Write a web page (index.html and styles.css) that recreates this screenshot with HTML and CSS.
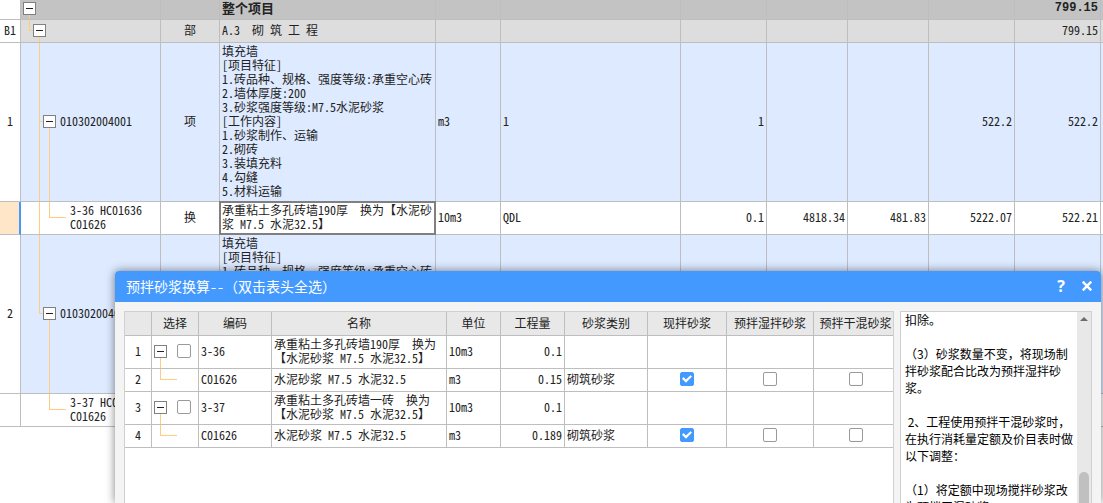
FILE: index.html
```html
<!DOCTYPE html>
<html lang="zh-CN">
<head>
<meta charset="utf-8">
<title>预拌砂浆换算</title>
<link rel="stylesheet" href="styles.css">
</head>
<body>
<main>
<table class="grid sheet">
  <colgroup>
    <col class="c-index"><col class="c-tree"><col class="c-kind"><col class="c-name"><col class="c-unit"><col>
    <col class="c-wide"><col class="c-price"><col class="c-price"><col class="c-wide"><col class="c-wide"><col class="c-rest">
  </colgroup>
  <tbody>
    <tr class="total">
      <td class="index"></td>
      <td class="tree level-0"><span class="line from-toggle"></span><button class="toggle" aria-label="折叠"></button></td>
      <td></td><td>整个项目</td><td></td><td></td><td></td><td></td><td></td><td></td><td class="num">799.15</td><td></td>
    </tr>
    <tr class="section">
      <td class="index">B1</td>
      <td class="tree level-1"><span class="line elbow to-toggle"></span><span class="line from-toggle"></span><button class="toggle" aria-label="折叠"></button></td>
      <td class="mid">部</td><td>A.3  砌 筑 工 程</td><td></td><td></td><td></td><td></td><td></td><td></td><td class="num">799.15</td><td></td>
    </tr>
    <tr class="item">
      <td class="index">1</td>
      <td class="tree level-2"><span class="line elbow to-toggle"></span><span class="line trunk"></span><span class="line from-toggle"></span><button class="toggle" aria-label="折叠"></button>010302004001</td>
      <td class="mid">项</td>
      <td>填充墙<br>[项目特征]<br>1.砖品种、规格、强度等级:承重空心砖<br>2.墙体厚度:200<br>3.砂浆强度等级:M7.5水泥砂浆<br>[工作内容]<br>1.砂浆制作、运输<br>2.砌砖<br>3.装填充料<br>4.勾缝<br>5.材料运输</td>
      <td>m3</td><td>1</td><td class="num">1</td><td></td><td></td><td class="num">522.2</td><td class="num">522.2</td><td></td>
    </tr>
    <tr class="detail">
      <td class="index current"></td>
      <td class="tree leaf"><span class="line trunk"></span><span class="line elbow to-text"></span>3-36 HC01636<br>C01626</td>
      <td class="mid">换</td>
      <td class="selected">承重粘土多孔砖墙190厚  换为【水泥砂<br>浆 M7.5 水泥32.5】</td>
      <td>10m3</td><td>QDL</td><td class="num">0.1</td><td class="num">4818.34</td><td class="num">481.83</td><td class="num">5222.07</td><td class="num">522.21</td><td></td>
    </tr>
    <tr class="item">
      <td class="index">2</td>
      <td class="tree level-2"><span class="line elbow to-toggle"></span><span class="line from-toggle"></span><button class="toggle" aria-label="折叠"></button>010302004001</td>
      <td></td>
      <td>填充墙<br>[项目特征]<br>1.砖品种、规格、强度等级:承重空心砖<br>2.墙体厚度:200<br>3.砂浆强度等级:M7.5水泥砂浆<br>[工作内容]<br>1.砂浆制作、运输<br>2.砌砖<br>3.装填充料<br>4.勾缝<br>5.材料运输</td>
      <td></td><td></td><td></td><td></td><td></td><td></td><td></td><td></td>
    </tr>
    <tr class="detail">
      <td class="index"></td>
      <td class="tree leaf"><span class="line elbow to-text"></span>3-37 HC01636<br>C01626</td>
      <td></td><td></td><td></td><td></td><td></td><td></td><td></td><td></td><td></td><td></td>
    </tr>
  </tbody>
</table>
</main>

<section class="dialog" role="dialog" aria-labelledby="dialog-title">
  <header class="titlebar">
    <h1 id="dialog-title">预拌砂浆换算<span class="dashes">--</span>（双击表头全选）</h1>
    <button class="help" aria-label="帮助">?</button>
    <button class="close" aria-label="关闭"><svg width="12" height="10" viewBox="0 0 12 10"><path d="M1.8 .6 10.2 9.4M10.2 .6 1.8 9.4" stroke="#fff" stroke-width="2.4" fill="none"/></svg></button>
  </header>
  <div class="content">
    <div class="pane">
      <table class="grid mortar">
        <colgroup>
          <col class="m-index"><col class="m-pick"><col class="m-code"><col><col class="m-unit"><col class="m-qty"><col class="m-type"><col class="m-site"><col class="m-wet"><col class="m-dry">
        </colgroup>
        <thead>
          <tr><th></th><th>选择</th><th>编码</th><th>名称</th><th>单位</th><th>工程量</th><th>砂浆类别</th><th>现拌砂浆</th><th>预拌湿拌砂浆</th><th>预拌干混砂浆</th></tr>
        </thead>
        <tbody>
          <tr class="detail">
            <td class="index">1</td>
            <td class="tree pick"><span class="line from-toggle"></span><div class="pair"><button class="toggle" aria-label="折叠"></button><input type="checkbox" aria-label="选择 3-36"></div></td>
            <td>3-36</td><td>承重粘土多孔砖墙190厚  换为<br>【水泥砂浆 M7.5 水泥32.5】</td><td>10m3</td><td class="num">0.1</td><td></td><td></td><td></td><td></td>
          </tr>
          <tr>
            <td class="index">2</td>
            <td class="tree pick"><span class="line elbow to-text"></span></td>
            <td>C01626</td><td>水泥砂浆 M7.5 水泥32.5</td><td>m3</td><td class="num">0.15</td><td>砌筑砂浆</td>
            <td class="mid"><input type="checkbox" aria-label="现拌砂浆" checked></td><td class="mid"><input type="checkbox" aria-label="预拌湿拌砂浆"></td><td class="mid"><input type="checkbox" aria-label="预拌干混砂浆"></td>
          </tr>
          <tr class="detail">
            <td class="index">3</td>
            <td class="tree pick"><span class="line from-toggle"></span><div class="pair"><button class="toggle" aria-label="折叠"></button><input type="checkbox" aria-label="选择 3-37"></div></td>
            <td>3-37</td><td>承重粘土多孔砖墙一砖  换为<br>【水泥砂浆 M7.5 水泥32.5】</td><td>10m3</td><td class="num">0.1</td><td></td><td></td><td></td><td></td>
          </tr>
          <tr>
            <td class="index">4</td>
            <td class="tree pick"><span class="line elbow to-text"></span></td>
            <td>C01626</td><td>水泥砂浆 M7.5 水泥32.5</td><td>m3</td><td class="num">0.189</td><td>砌筑砂浆</td>
            <td class="mid"><input type="checkbox" aria-label="现拌砂浆" checked></td><td class="mid"><input type="checkbox" aria-label="预拌湿拌砂浆"></td><td class="mid"><input type="checkbox" aria-label="预拌干混砂浆"></td>
          </tr>
        </tbody>
      </table>
    </div>
    <aside class="notes">
      <div class="notes-text">
        <p>扣除。</p>
        <p>（3）砂浆数量不变，将现场制拌砂浆配合比改为预拌湿拌砂浆。</p>
        <p>&nbsp;2、工程使用预拌干混砂浆时，在执行消耗量定额及价目表时做以下调整：</p>
        <p>（1）将定额中现场搅拌砂浆改为预拌干混砂浆。</p>
      </div>
      <div class="scrollbar">
        <svg width="8" height="4" viewBox="0 0 8 4"><path d="M0 4 4 0 8 4Z" fill="#6b6b72"/></svg>
        <div class="thumb"></div>
      </div>
    </aside>
  </div>
</section>
</body>
</html>
```
FILE: styles.css
```css
* { box-sizing: border-box; }

html, body { height: 100%; }

body {
  margin: 0;
  position: relative;
  overflow: hidden;
  background: #fff;
  color: #222;
  font-family: "Noto Sans CJK SC", sans-serif;
  font-size: 12px;
  line-height: 14px;
  text-spacing-trim: space-all;
}

button { padding: 0; border: 0; background: none; font: inherit; color: inherit; }

/* Grids */
.grid {
  width: 100%;
  table-layout: fixed;
  border-collapse: separate;
  border-spacing: 0;
  font-feature-settings: "hwid";
}

.grid td, .grid th {
  height: 23px;
  padding: 1px 2px 3px;
  border-right: 1px solid #bebebe;
  border-bottom: 1px solid #bebebe;
  vertical-align: middle;
  text-align: left;
  white-space: pre;
  overflow: hidden;
  font-weight: 400;
}

.grid .mid, .grid .index, .grid th { text-align: center; }
.grid .num { text-align: right; }
.grid .index { background: #fff; }
.grid .detail td { height: 33px; }

.c-index { width: 21px; }
.c-tree { width: 140px; }
.c-kind { width: 59px; }
.c-name { width: 216px; }
.c-unit { width: 65px; }
.c-wide { width: 86px; }
.c-price { width: 81px; }
.c-rest { width: 2px; }

.sheet td:last-child { padding: 0; border-right: 0; }
.sheet .total td { height: 20px; padding-top: 0; padding-bottom: 4px; background: #c3c3c3; font-size: 13px; font-weight: 700; }
.sheet .total .num { font-family: "Liberation Mono", monospace; font-size: 12px; }
.sheet .total .index { background: #fff; }
.sheet .section td { background: #ddd; }
.sheet .item td { background: #deeaff; }
.sheet .section .index, .sheet .item .index { background: #fff; }
.sheet .index.current { background: #ffe6c8; border-right: 2px solid #49f; }

.grid .selected { position: relative; overflow: visible; }
.selected::after {
  content: "";
  position: absolute;
  inset: -1px;
  border: 2px solid #808080;
}

/* Tree column */
.grid .tree { position: relative; --x: 0px; }
.grid .level-0 { --x: 2px; }
.grid .level-1 { --x: 12px; }
.grid .level-2 { --x: 22px; }
.grid .pick { --x: 2px; }
.grid .tree { padding-left: var(--x); }
.grid .leaf { --x: 22px; padding-left: 49px; }

.toggle {
  display: inline-flex;
  align-items: center;
  justify-content: center;
  width: 13px;
  height: 13px;
  margin-right: 4px;
  border: 1px solid #808080;
  background: #fff;
  vertical-align: bottom;
  position: relative;
}
.toggle::before { content: ""; width: 7px; height: 1px; background: #222; }

.line { position: absolute; border: 0 solid #ffcc80; }
.from-toggle { top: 50%; bottom: -1px; left: calc(var(--x) + 6px); border-left-width: 1px; }
.elbow { top: -1px; bottom: 50%; border-left-width: 1px; border-bottom-width: 1px; }
.to-toggle { left: calc(var(--x) - 4px); width: 5px; }
.to-text { left: calc(var(--x) + 6px); width: 17px; }
.trunk { top: -1px; bottom: -1px; left: 18px; border-left-width: 1px; }

.pair { display: flex; align-items: center; gap: 6px; }

input[type="checkbox"] {
  appearance: none;
  display: block;
  width: 14px;
  height: 14px;
  margin: 0 auto;
  border: 1px solid #999;
  border-radius: 2px;
  background: #fff;
}
.pair input[type="checkbox"] { margin: 0; }
input[type="checkbox"]:checked { border-color: #49f; background: #49f; }
input[type="checkbox"]:checked::before {
  content: "";
  display: block;
  width: 10px;
  height: 8px;
  margin: 2px 1px;
  background: #fff;
  clip-path: polygon(0 46%, 15% 26%, 40% 55%, 84% 2%, 100% 20%, 40% 96%);
}

/* Dialog */
.dialog {
  position: absolute;
  top: 271px;
  right: 2px;
  bottom: 0;
  left: 115px;
  display: flex;
  flex-direction: column;
  border-radius: 4px 4px 0 0;
  background: #f4f4f4;
  box-shadow: 0 0 10px rgba(0, 0, 0, .5);
}

.titlebar {
  display: flex;
  align-items: center;
  flex: none;
  height: 31px;
  padding: 0 8px 1px 11px;
  border-radius: 4px 4px 0 0;
  background: #49f;
  color: #fff;
}
.titlebar h1 {
  flex: 1;
  margin: 0;
  font-size: 14px;
  font-weight: 400;
  line-height: 20px;
}
.dashes { font-feature-settings: "hwid"; }
.help { width: 12px; margin-right: 14px; font: 700 16px/20px "Open Sans", sans-serif; }
.close { display: flex; }

.content {
  display: flex;
  flex: 1;
  gap: 6px;
  min-height: 0;
  padding: 9px 9px 0;
}

.pane {
  flex: 1;
  overflow: hidden;
  border: 1px solid #d0d0d0;
  border-bottom: 0;
  background: #fff;
}
/* The last column runs on under the pane's right edge */
.mortar { width: calc(100% + 4px); }
.m-index { width: 27px; }
.m-pick { width: 47px; }
.m-code { width: 73px; }
.m-unit { width: 54px; }
.m-qty { width: 64px; }
.m-type { width: 83px; }
.m-site { width: 79px; }
.m-wet { width: 87px; }
.m-dry { width: 83px; }
.mortar th { height: 24px; background: #e8e8e8; }
.mortar th:last-child, .mortar td:last-child { border-right: 0; }

.notes {
  display: flex;
  width: 192px;
  overflow: hidden;
  border: 1px solid #d0d0d0;
  border-bottom: 0;
  background: #fff;
  color: #000;
  line-height: 17px;
}
.notes-text { flex: 1; padding-left: 4px; }
.notes-text p { margin: 0 0 17px; }
.notes-text p:first-child { line-height: 16px; }
.scrollbar {
  display: flex;
  flex-direction: column;
  align-items: center;
  width: 14px;
  padding-top: 5px;
  background: #e8e8e8;
}
.scrollbar svg { flex: none; }
.thumb { flex: 1; width: 10px; margin-top: 151px; border-radius: 5px 5px 0 0; background: #c0c0c0; }
```
